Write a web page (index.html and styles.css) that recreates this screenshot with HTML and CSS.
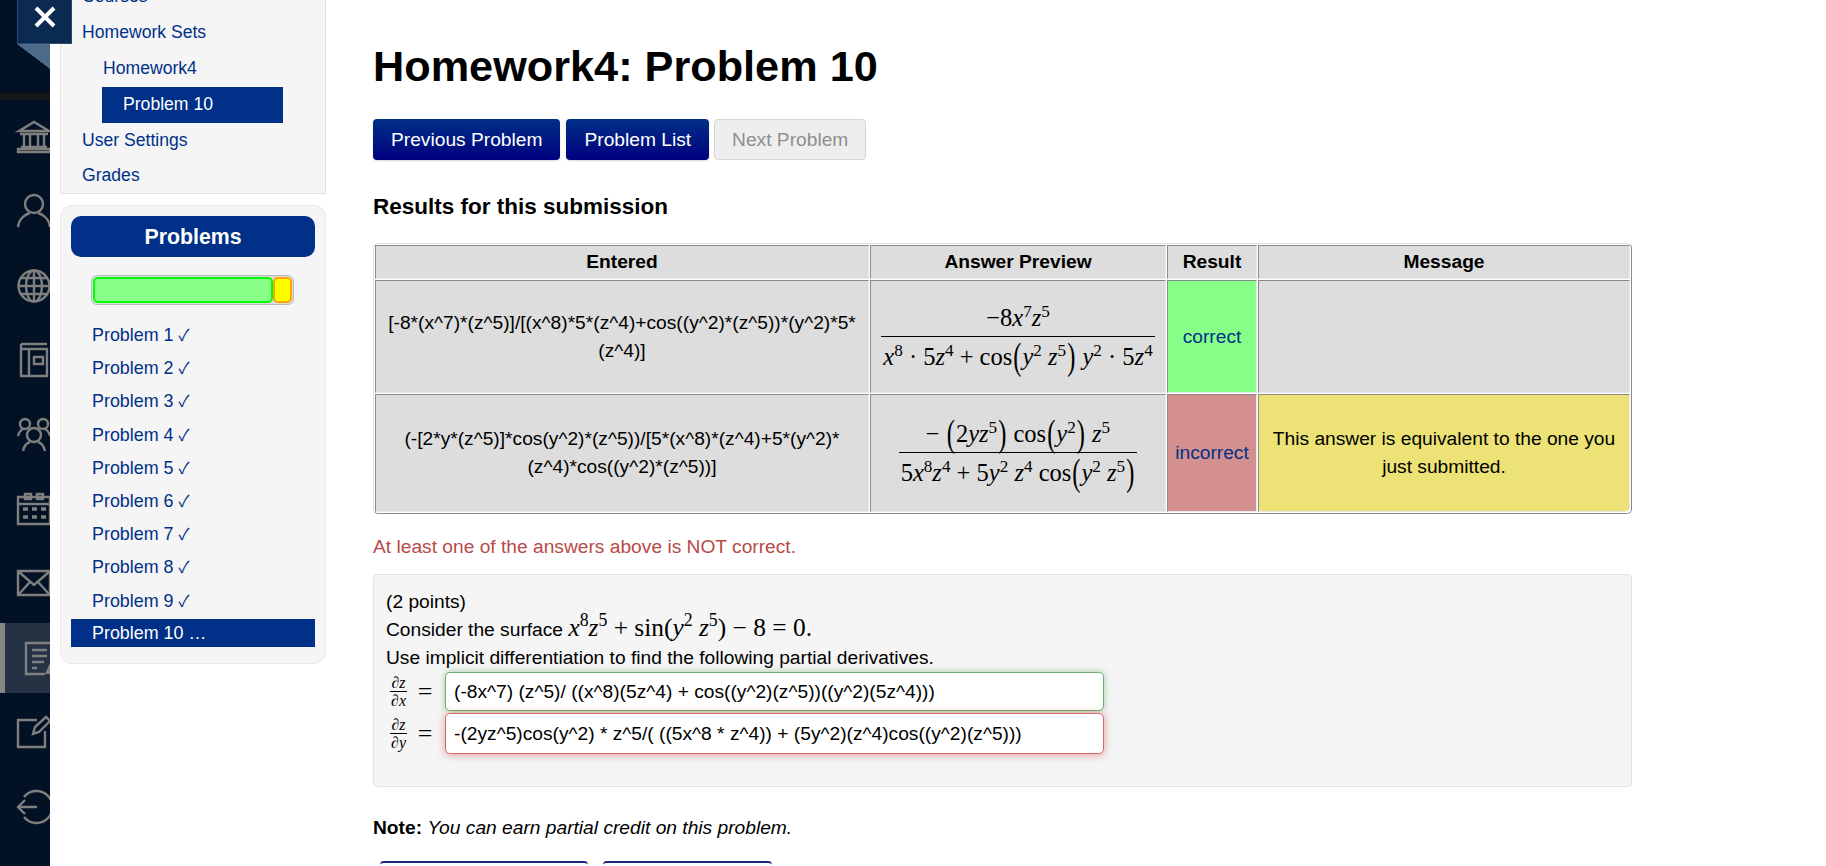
FILE: index.html
```html
<!DOCTYPE html>
<html lang="en">
<head>
  <meta charset="UTF-8" />
  <meta name="viewport" content="width=device-width, initial-scale=1.0"/>
  <title>Homework4: Problem 10</title>
  <link rel="stylesheet" href="styles.css">
</head>
<body>

  <div class="page">

    <!-- Dark icon rail -->
    <nav class="rail">
      <div class="rail-top"></div>
      <div class="rail-rule"></div>
      <div class="rail-list">
        <a class="rail-item" href="#">
          <svg class="icon" viewBox="0 0 34 34"><path d="M2 11 L17 2 L32 11 Z M3 14 H31 M7 14 V26 M13 14 V26 M21 14 V26 M27 14 V26 M4 27 H30 M1 32 H33 V29 H1 Z"/></svg>
        </a>
        <a class="rail-item" href="#">
          <svg class="icon" viewBox="0 0 34 34"><circle cx="17" cy="10" r="9"/><path d="M1 33 C2 24 9 20 13 19 M33 33 C32 24 25 20 21 19"/></svg>
        </a>
        <a class="rail-item" href="#">
          <svg class="icon" viewBox="0 0 34 34"><circle cx="17" cy="17" r="15.5"/><ellipse cx="17" cy="17" rx="8" ry="15.5"/><path d="M17 2 V32 M2 17 H32 M4 9 H30 M4 25 H30"/></svg>
        </a>
        <a class="rail-item" href="#">
          <svg class="icon" viewBox="0 0 34 34"><path d="M4 1 H30 M4 1 V33 H30 V6 H4 M12 6 V33 M17 14 H26 V21 H17 Z"/></svg>
        </a>
        <a class="rail-item" href="#">
          <svg class="icon" viewBox="0 0 34 34"><circle cx="8" cy="6" r="5"/><circle cx="26" cy="6" r="5"/><circle cx="17" cy="17" r="7"/><path d="M1 18 C2 14 4 12 6 11 M33 18 C32 14 30 12 28 11 M6 33 C7 28 10 25 13 24 M28 33 C27 28 24 25 21 24"/></svg>
        </a>
        <a class="rail-item" href="#">
          <svg class="icon" viewBox="0 0 34 34"><path d="M1 5 H33 V32 H1 Z M1 12 H33 M8 2 H14 V7 H8 Z M20 2 H26 V7 H20 Z"/><path class="dots" d="M6 17 H11 M15 17 H20 M24 17 H29 M6 25 H11 M15 25 H20 M24 25 H29"/></svg>
        </a>
        <a class="rail-item" href="#">
          <svg class="icon" viewBox="0 0 34 34"><path d="M1 5 H33 V29 H1 Z M2 6 L17 19 L32 6 M2 28 L13 16 M32 28 L21 16"/></svg>
        </a>
        <a class="rail-item rail-active" href="#">
          <svg class="icon" viewBox="0 0 34 34"><path d="M28 14 V2 H1 V33 H20 M7 9 H22 M7 15 H22 M7 21 H19 M7 27 H12"/><path class="solid" d="M20 33 L24 24 L33 16 L34 33 Z"/></svg>
        </a>
        <a class="rail-item" href="#">
          <svg class="icon" viewBox="0 0 34 34"><path d="M20 5 H1 V32 H28 V16 M16 19 L18 12 L29 2 L33 6 L22 17 Z"/></svg>
        </a>
        <a class="rail-item" href="#">
          <svg class="icon" viewBox="0 0 34 34"><path d="M7 7 A16 16 0 1 1 7 27 M1 17 H20 M8 10 L1 17 L8 24"/></svg>
        </a>
      </div>
    </nav>

    <a class="close-btn" href="#">
      <svg viewBox="0 0 22 22"><path d="M2 2 L20 20 M20 2 L2 20"/></svg>
    </a>
    <div class="close-fold"></div>

    <!-- Site navigation -->
    <aside class="sidebar">
      <div class="site-nav">
        <a href="#">Courses</a>
        <a href="#">Homework Sets</a>
        <a class="sub" href="#">Homework4</a>
        <a class="sub current" href="#">Problem 10</a>
        <a href="#">User Settings</a>
        <a href="#">Grades</a>
      </div>

      <div class="problems">
        <h3>Problems</h3>
        <div class="progress">
          <div class="progress-right"></div>
          <div class="progress-wrong"></div>
        </div>
        <ul>
          <li><a href="#">Problem 1 <span class="check">✓</span></a></li>
          <li><a href="#">Problem 2 <span class="check">✓</span></a></li>
          <li><a href="#">Problem 3 <span class="check">✓</span></a></li>
          <li><a href="#">Problem 4 <span class="check">✓</span></a></li>
          <li><a href="#">Problem 5 <span class="check">✓</span></a></li>
          <li><a href="#">Problem 6 <span class="check">✓</span></a></li>
          <li><a href="#">Problem 7 <span class="check">✓</span></a></li>
          <li><a href="#">Problem 8 <span class="check">✓</span></a></li>
          <li><a href="#">Problem 9 <span class="check">✓</span></a></li>
          <li class="active"><a href="#">Problem 10 …</a></li>
        </ul>
      </div>
    </aside>

    <!-- Problem -->
    <main class="content">
      <h1>Homework4: Problem 10</h1>

      <div class="nav-buttons">
        <a class="btn" href="#">Previous Problem</a>
        <a class="btn" href="#">Problem List</a>
        <span class="btn disabled">Next Problem</span>
      </div>

      <h2>Results for this submission</h2>

      <table class="attempts">
        <colgroup>
          <col class="col-entered">
          <col class="col-preview">
          <col class="col-result">
          <col class="col-message">
        </colgroup>
        <thead>
          <tr class="row-head">
            <th>Entered</th>
            <th>Answer Preview</th>
            <th>Result</th>
            <th>Message</th>
          </tr>
        </thead>
        <tbody>
          <tr class="row-one">
            <td>[-8*(x^7)*(z^5)]/[(x^8)*5*(z^4)+cos((y^2)*(z^5))*(y^2)*5*(z^4)]</td>
            <td>
              <span class="math frac">
                <span class="num">−8<i>x</i><sup>7</sup><i>z</i><sup>5</sup></span>
                <span class="den"><i>x</i><sup>8</sup> · 5<i>z</i><sup>4</sup> + cos<span class="paren">(</span><i>y</i><sup>2</sup> <i>z</i><sup>5</sup><span class="paren">)</span> <i>y</i><sup>2</sup> · 5<i>z</i><sup>4</sup></span>
              </span>
            </td>
            <td class="ok"><a href="#">correct</a></td>
            <td></td>
          </tr>
          <tr class="row-two">
            <td>(-[2*y*(z^5)]*cos(y^2)*(z^5))/[5*(x^8)*(z^4)+5*(y^2)*(z^4)*cos((y^2)*(z^5))]</td>
            <td>
              <span class="math frac">
                <span class="num">− <span class="paren">(</span>2<i>y</i><i>z</i><sup>5</sup><span class="paren">)</span> cos<span class="paren">(</span><i>y</i><sup>2</sup><span class="paren">)</span> <i>z</i><sup>5</sup></span>
                <span class="den">5<i>x</i><sup>8</sup><i>z</i><sup>4</sup> + 5<i>y</i><sup>2</sup> <i>z</i><sup>4</sup> cos<span class="paren">(</span><i>y</i><sup>2</sup> <i>z</i><sup>5</sup><span class="paren">)</span></span>
              </span>
            </td>
            <td class="bad"><a href="#">incorrect</a></td>
            <td class="warn">This answer is equivalent to the one you just submitted.</td>
          </tr>
        </tbody>
      </table>

      <p class="alert-text">At least one of the answers above is NOT correct.</p>

      <div class="problem-box">
        <div class="line">(2 points)</div>
        <div class="line">Consider the surface <span class="math inline"><i>x</i><sup>8</sup><i>z</i><sup>5</sup> + sin(<i>y</i><sup>2</sup> <i>z</i><sup>5</sup>) − 8 = 0.</span></div>
        <div class="line">Use implicit differentiation to find the following partial derivatives.</div>

        <div class="answer-row row-x">
          <span class="math frac small"><span class="num">∂<i>z</i></span><span class="den">∂<i>x</i></span></span>
          <span class="math equals">=</span>
          <input class="right" type="text" value="(-8x^7) (z^5)/ ((x^8)(5z^4) + cos((y^2)(z^5))((y^2)(5z^4)))" />
        </div>
        <div class="answer-row row-y">
          <span class="math frac small"><span class="num">∂<i>z</i></span><span class="den">∂<i>y</i></span></span>
          <span class="math equals">=</span>
          <input class="wrong" type="text" value="-(2yz^5)cos(y^2) * z^5/( ((5x^8 * z^4)) + (5y^2)(z^4)cos((y^2)(z^5)))" />
        </div>
      </div>

      <p class="note"><b>Note:</b> <em>You can earn partial credit on this problem.</em></p>

      <div class="submit-buttons">
        <a class="submit btn-preview" href="#" aria-label="Preview My Answers"></a>
        <a class="submit btn-check" href="#" aria-label="Check Answers"></a>
      </div>
    </main>

  </div>

</body>
</html>
```

FILE: styles.css
```css
html, body {
  height: 100%;
  margin: 0;
  overflow: hidden;
}
body {
  font-family: "Liberation Sans", Arial, sans-serif;
  font-size: 19.2px;
  line-height: 28px;
  color: #000;
  background: #fff;
}
a {
  color: #003087;
  text-decoration: none;
}
.page {
  display: flex;
  position: relative;
  height: 866px;
  overflow: hidden;
}

/* icon rail */
.rail {
  flex: 0 0 50px;
  width: 50px;
  overflow: hidden;
  background: #021124;
}
.rail-top {
  height: 93px;
}
.rail-rule {
  height: 7px;
  background: #15161a;
}
.rail-list {
  display: flex;
  flex-direction: column;
  gap: 4.4px;
  padding-top: 2px;
}
.rail-item {
  display: flex;
  align-items: center;
  flex: 0 0 70px;
  width: 70px;
  padding-left: 17px;
  box-sizing: border-box;
}
.rail-active {
  padding-left: 20px;
  background: #253244;
  border-left: 5px solid #858585;
}
.icon {
  flex: 0 0 34px;
  width: 34px;
  height: 34px;
  fill: none;
  stroke: #7f7f7f;
  stroke-width: 2.4;
  overflow: visible;
}
.icon .dots {
  stroke-width: 3.5;
}
.icon .solid {
  fill: #7f7f7f;
  stroke: none;
}

/* close button over the rail */
.close-btn {
  position: absolute;
  top: 0;
  left: 17px;
  display: flex;
  align-items: center;
  justify-content: center;
  width: 55px;
  height: 44px;
  box-sizing: border-box;
  background: #0b2a52;
  border: 1px solid #2c4a70;
  border-top: none;
  z-index: 2;
}
.close-btn svg {
  width: 22px;
  height: 22px;
  margin-top: -9px;
  fill: none;
  stroke: #fff;
  stroke-width: 4;
}
.close-fold {
  position: absolute;
  top: 44px;
  left: 17px;
  width: 33px;
  height: 25px;
  background: linear-gradient(to top right, transparent 49.5%, #4d6a8a 50.5%);
  z-index: 1;
}

/* sidebar */
.sidebar {
  flex: 0 0 266px;
  width: 266px;
  margin-left: 10px;
  font-size: 17.6px;
}
.site-nav {
  display: flex;
  flex-direction: column;
  margin-top: -21px;
  background: #f5f5f5;
  border: 1px solid #e3e3e3;
  border-top: none;
  height: 215px;
  box-sizing: border-box;
}
.site-nav a {
  display: block;
  height: 35.9px;
  line-height: 35.9px;
  padding-left: 21px;
}
.site-nav .sub {
  margin-left: 21px;
}
.site-nav .current {
  width: 181px;
  margin-left: 41px;
  box-sizing: border-box;
  background: #003087;
  color: #fff;
}
.problems {
  height: 459px;
  margin-top: 11px;
  padding: 10px;
  box-sizing: border-box;
  background: #f5f5f5;
  border: 1px solid #e8e8e8;
  border-radius: 12px;
}
.problems h3 {
  height: 41px;
  margin: 0;
  font-size: 21.3px;
  line-height: 42px;
  text-align: center;
  color: #fff;
  background: #003087;
  border-radius: 10px;
}
.progress {
  display: flex;
  width: 203px;
  height: 30px;
  margin: 18px 0 0 20px;
  padding: 1px;
  box-sizing: border-box;
  background: #ddd;
  border: 1px solid #bbb;
  border-radius: 6px;
}
.progress-right {
  flex: 0 0 180px;
  box-sizing: border-box;
  background: #88ff88;
  border: 2px solid #0f0;
  border-radius: 5px;
}
.progress-wrong {
  flex: 1;
  box-sizing: border-box;
  background: #ff0;
  border: 2px solid #ffa500;
  border-radius: 5px;
}
.problems ul {
  margin: 15px 0 0;
  padding: 0;
  list-style: none;
  font-size: 17.9px;
}
.problems li {
  height: 28px;
  margin-bottom: 5.2px;
  padding-left: 21px;
}
.problems li.active {
  margin-top: 5px;
  background: #003087;
}
.problems li.active a {
  color: #fff;
}
.check {
  font-family: "Noto Sans CJK JP", sans-serif;
  font-size: 16px;
}

/* main column */
.content {
  flex: 0 0 1259px;
  width: 1259px;
  margin-left: 47px;
}
h1 {
  margin: 44px 0 31px;
  font-size: 43.25px;
  line-height: 44px;
  font-weight: bold;
}
.nav-buttons {
  display: flex;
  gap: 6px;
}
.btn {
  display: block;
  height: 41px;
  padding: 0 18px;
  box-sizing: border-box;
  line-height: 41px;
  color: #fff;
  background: linear-gradient(to bottom, #003087, #00007f);
  border-radius: 4px;
  box-shadow: 0 1px 2px rgba(0,0,0,0.15);
  white-space: nowrap;
}
.btn.disabled {
  margin-left: -1px;
  padding: 0 17px;
  color: #8f8f8f;
  background: #eee;
  border: 1px solid #d5d5d5;
  line-height: 39px;
  box-shadow: none;
}
h2 {
  margin: 33px 0 22px;
  font-size: 22.5px;
  line-height: 28px;
  font-weight: bold;
}

/* attempt results */
.attempts {
  width: 1259px;
  table-layout: fixed;
  border-collapse: separate;
  border-spacing: 1px;
  border: 1px solid;
  border-color: #e0e0e0 #8a8a8a #8a8a8a #e0e0e0;
  border-radius: 5px;
}
.col-entered { width: 494px; }
.col-preview { width: 296px; }
.col-result { width: 90px; }
.col-message { width: 372px; }
.attempts th, .attempts td {
  padding: 0 10px;
  box-sizing: border-box;
  text-align: center;
  vertical-align: middle;
  background: #ddd;
  border: 1px solid;
  border-color: #8a8a8a #e8e8e8 #e8e8e8 #8a8a8a;
}
.attempts td:nth-child(2) {
  padding: 0;
}
.row-head { height: 34px; }
.row-one { height: 113px; }
.row-two { height: 118px; }
.attempts .ok { background: #88ff88; padding: 0; }
.attempts .bad { background: #d48f8f; padding: 0; }
.attempts .warn { background: #ede275; border-bottom-right-radius: 5px; }

/* typeset math */
.math {
  font-family: "Liberation Serif", "Times New Roman", serif;
  font-size: 24.5px;
}
.math sup {
  font-size: 0.7em;
  line-height: 0;
  vertical-align: 0.55em;
}
.frac {
  display: inline-flex;
  flex-direction: column;
  align-items: stretch;
  vertical-align: middle;
  line-height: 35px;
  white-space: nowrap;
}
.num {
  text-align: center;
  padding: 0 2px 1px;
  border-bottom: 1px solid #000;
}
.den {
  text-align: center;
  padding: 2px 2px 0;
}
.paren {
  display: inline-block;
  margin: 0 1px;
  line-height: 1;
  transform: scaleY(1.55);
}
.frac.small {
  font-size: 16px;
  line-height: 17px;
  margin-left: 4px;
}
.frac.small .num, .frac.small .den {
  padding: 0 1px;
}
.inline {
  font-size: 25.4px;
  line-height: 0;
}
.alert-text {
  margin: 19px 0 13px;
  color: #b94a48;
}

/* problem text */
.problem-box {
  height: 213px;
  padding: 13px 12px 0;
  box-sizing: border-box;
  background: #f5f5f5;
  border: 1px solid #e3e3e3;
  border-radius: 4px;
}
.line {
  height: 28px;
}
.answer-row {
  display: flex;
  align-items: center;
}
.row-x { height: 39px; margin: 0 0 2px; }
.row-y { height: 41px; }
.equals {
  width: 16px;
  margin: 0 12px 0 10px;
  font-size: 26px;
  text-align: center;
}
.answer-row input {
  width: 659px;
  height: 100%;
  padding: 0 8px;
  box-sizing: border-box;
  font: 19.2px "Liberation Sans", Arial, sans-serif;
  color: #000;
  background: #fff;
  border-radius: 5px;
  outline: none;
}
.answer-row .right {
  border: 1px solid #6fae6f;
  box-shadow: 0 0 6px rgba(70,160,70,0.5);
}
.answer-row .wrong {
  border: 1px solid #d66a6a;
  box-shadow: 0 1px 8px rgba(210,80,80,0.55);
}
.note {
  margin: 27px 0 19px;
}
.submit-buttons {
  display: flex;
  gap: 15px;
  margin-left: 7px;
}
.submit {
  display: block;
  height: 41px;
  box-sizing: border-box;
  background: #fff;
  border-top: 2px solid #14247a;
  border-radius: 4px;
}
.btn-preview { width: 208px; }
.btn-check { width: 169px; }
```
